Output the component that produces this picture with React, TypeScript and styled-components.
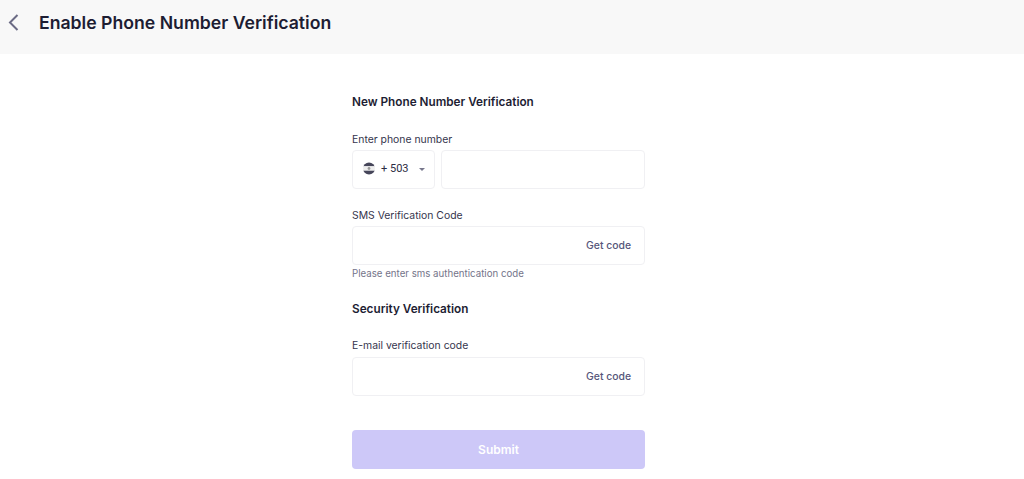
import React from "react";
import styled, { createGlobalStyle } from "styled-components";

const GlobalStyle = createGlobalStyle`
  html, body {
    margin: 0;
    padding: 0;
    background: #fff;
    font-family: Inter, "Liberation Sans", sans-serif;
  }
`;

const Page = styled.div`
  width: 1024px;
  height: 479px;
  overflow: hidden;
  display: flex;
  flex-direction: column;
`;

const Header = styled.header`
  height: 54px;
  flex: none;
  background: #f8f8f8;
  display: flex;
  align-items: center;
  gap: 20px;
  padding: 0 0 9px 8px;
  box-sizing: border-box;
`;

const BackIcon = styled.svg`
  width: 11px;
  height: 17px;
  fill: none;
  stroke: #6b6b85;
  stroke-width: 2;
`;

const Title = styled.h1`
  margin: 0;
  font-size: 17.65px;
  line-height: 24px;
  font-weight: 600;
  color: #1d1d33;
`;

const Form = styled.main`
  width: 293px;
  margin-left: 352px;
  padding-top: 40px;
  display: flex;
  flex-direction: column;
`;

const SectionTitle = styled.h2<{ $after: number }>`
  margin: 0 0 ${(p) => p.$after}px;
  font-size: 11.75px;
  line-height: 16px;
  font-weight: 600;
  color: #1d1d33;
`;

const Label = styled.label<{ $after?: number }>`
  display: block;
  font-size: 10.4px;
  line-height: 14px;
  margin-bottom: ${(p) => p.$after ?? 3}px;
  color: #35354d;
`;

const Row = styled.div`
  display: flex;
  gap: 6px;
`;

const Box = styled.div<{ $grow?: boolean }>`
  height: 39px;
  box-sizing: border-box;
  border: 1px solid #f0f0f3;
  border-radius: 4px;
  background: #fff;
  display: flex;
  align-items: center;
  ${(p) => (p.$grow ? "flex: 1;" : "")}
`;

const CountrySelect = styled(Box)`
  width: 83px;
  flex: none;
  padding: 0 0 2px 10px;
  gap: 6px;
  font-family: Roboto, "Liberation Sans", sans-serif;
  font-size: 11px;
  color: #2b2b42;
`;

const Caret = styled.span`
  width: 0;
  height: 0;
  margin: 1px 0 0 4px;
  border-left: 3px solid transparent;
  border-right: 3px solid transparent;
  border-top: 3.5px solid #77778c;
`;

const CodeBox = styled(Box)`
  justify-content: flex-end;
  padding-right: 13px;
`;

const GetCode = styled.span`
  font-size: 10.4px;
  font-weight: 500;
  color: #55557a;
`;

const Hint = styled.p`
  margin: 3px 0 0;
  font-size: 9.7px;
  line-height: 12px;
  color: #74748a;
`;

const Submit = styled.button`
  height: 39px;
  margin-top: 34px;
  border: none;
  border-radius: 4px;
  background: #cdc8f8;
  color: #fff;
  font-family: inherit;
  font-size: 12px;
  font-weight: 600;
`;

const Field = styled.div<{ $after: number }>`
  margin-bottom: ${(p) => p.$after}px;
`;

const Flag = () => (
  <svg width="12" height="13" viewBox="0 0 12 13">
    <defs>
      <clipPath id="flag-circle">
        <circle cx="6" cy="6.5" r="6" />
      </clipPath>
    </defs>
    <g clipPath="url(#flag-circle)">
      <rect width="12" height="4.3" fill="#46465a" />
      <rect y="4.3" width="12" height="4.4" fill="#eeeeee" />
      <rect y="8.7" width="12" height="4.3" fill="#46465a" />
      <circle cx="6" cy="6.5" r="1.4" fill="#9a9a9a" />
    </g>
  </svg>
);

export default function App() {
  return (
    <Page>
      <GlobalStyle />
      <Header>
        <BackIcon viewBox="0 0 11 17">
          <path d="M9.5 1 L2 8.5 L9.5 16" />
        </BackIcon>
        <Title>Enable Phone Number Verification</Title>
      </Header>
      <Form>
        <SectionTitle $after={23}>New Phone Number Verification</SectionTitle>
        <Field $after={20}>
          <Label>Enter phone number</Label>
          <Row>
            <CountrySelect>
              <Flag />
              <span>+ 503</span>
              <Caret />
            </CountrySelect>
            <Box $grow />
          </Row>
        </Field>
        <Field $after={21}>
          <Label>SMS Verification Code</Label>
          <CodeBox>
            <GetCode>Get code</GetCode>
          </CodeBox>
          <Hint>Please enter sms authentication code</Hint>
        </Field>
        <SectionTitle $after={22}>Security Verification</SectionTitle>
        <Field $after={0}>
          <Label $after={4}>E-mail verification code</Label>
          <CodeBox>
            <GetCode>Get code</GetCode>
          </CodeBox>
        </Field>
        <Submit>Submit</Submit>
      </Form>
    </Page>
  );
}
